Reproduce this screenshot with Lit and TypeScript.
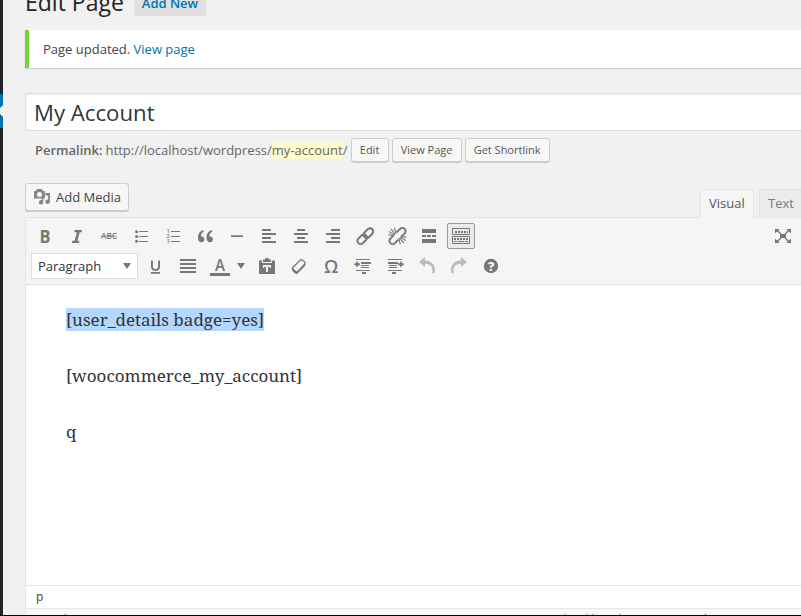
import { LitElement, html, css, svg, SVGTemplateResult } from "lit";
import { customElement, property } from "lit/decorators.js";
import { classMap } from "lit/directives/class-map.js";

const bars = (rows: number[][]) =>
  rows.map(([x, y, w, h]) => svg`<rect x=${x} y=${y} width=${w} height=${h} shape-rendering="crispEdges"/>`);

const ICONS: Record<string, SVGTemplateResult> = {
  bold: svg`<text x="4.6" y="16.6" font-size="17.5" font-weight="700" textLength="11" lengthAdjust="spacingAndGlyphs">B</text>`,
  italic: svg`<path d="M7.800 4h7v2.200h-2.100l-2.300 8.600h2l-.6 2.200h-7l.6-2.200h2.200l2.300-8.600H7.200z"/>`,
  strike: svg`<text x="2" y="13" font-size="8.400" font-weight="600" textLength="16" lengthAdjust="spacingAndGlyphs">ABC</text><path d="M2 9.800h16v.8H2z"/>`,
  bullets: svg`<circle cx="5.6" cy="5.7" r="1.5"/><circle cx="5.6" cy="10.5" r="1.5"/><circle cx="5.6" cy="15.3" r="1.5"/>${bars([[8, 5, 9, 1], [8, 10, 9, 1], [8, 15, 9, 1]])}`,
  numbers: svg`<g font-size="5.6" font-weight="600"><text x="3.6" y="7.2">1</text><text x="3.6" y="12.3">2</text><text x="3.6" y="17.400">3</text></g>${bars([[8, 5, 9, 1], [8, 10, 9, 1], [8, 15, 9, 1]])}`,
  quote: svg`<path d="M8.400 4.300C5 5 3 7.800 3 11.600 3 14.600 4.400 16.300 6.400 16.300c1.700 0 3-1.300 3-3 0-1.800-1.200-2.900-2.900-2.900h-.6c.1-2 .9-3.700 2.900-4.800z"/><path d="M16.900 4.300c-3.400.7-5.400 3.500-5.400 7.300 0 3 1.400 4.700 3.400 4.700 1.700 0 3-1.300 3-3 0-1.800-1.200-2.900-2.900-2.900h-.6c.1-2 .9-3.700 2.900-4.800z"/>`,
  rule: svg`<path d="M4 9.300h12v1.700H4z"/>`,
  left: svg`${bars([[3, 3, 9, 2], [3, 7, 14, 2], [3, 11, 9, 2], [3, 15, 14, 2]])}`,
  center: svg`${bars([[6, 3, 8, 2], [3, 7, 14, 2], [6, 11, 8, 2], [3, 15, 14, 2]])}`,
  right: svg`${bars([[8, 3, 9, 2], [3, 7, 14, 2], [8, 11, 9, 2], [3, 15, 14, 2]])}`,
  link: svg`<g fill="none" stroke="currentColor" stroke-width="2" transform="rotate(-45 10.500 10)"><rect x=".4" y="6.800" width="10.900" height="6.400" rx="3.200"/><rect x="9.200" y="6.800" width="10.900" height="6.400" rx="3.200"/></g>`,
  unlink: svg`<g fill="none" stroke="currentColor" stroke-width="2" transform="rotate(-45 10.500 10)"><path d="M8.500 6.800H3.600a3.200 3.200 0 0 0 0 6.400H8.500M12.500 6.800h4.900a3.200 3.200 0 0 1 0 6.400H12.500"/></g><path fill="none" stroke="currentColor" stroke-width="1.100" d="M9 8 7.500 1.800M8 8.200 4 2.800M7.400 9 1.800 5.400M7 9.800 1.500 8.600M11.800 12l1.500 6.200M12.800 11.800l4 5.400M13.400 11l5.600 3.600M13.800 10.200l5.500 1.200"/>`,
  more: svg`${bars([[3, 3, 14, 4], [3, 9, 4, 2], [8, 9, 4, 2], [13, 9, 4, 2], [3, 13, 14, 4]])}`,
  sink: svg`<path fill="none" stroke="currentColor" d="M1.500 2.500h17v6h-17zM1.500 10.500h17v7h-17z"/>${bars([[4, 5, 2, 2], [7, 5, 2, 2], [10, 5, 2, 2], [13, 5, 2, 2], [16, 5, 1, 2], [3, 12, 2, 2], [6, 12, 2, 2], [9, 12, 2, 2], [12, 12, 2, 2], [15, 12, 2, 2], [3, 15, 3, 1], [7, 15, 6, 1], [14, 15, 3, 1]])}`,
  under: svg`<path d="M5 4.600h1.900v5.600c0 2 .9 2.700 2.600 2.700s2.600-.7 2.600-2.700V4.600H14v5.800c0 3-1.600 4.400-4.500 4.400S5 13.400 5 10.400zM5 16h9v1.700H5z"/>`,
  justify: svg`${bars([[2, 3, 16, 2], [2, 7, 16, 2], [2, 11, 16, 2], [2, 15, 16, 2]])}`,
  color: svg`<text x="5" y="15" font-size="15.500" font-weight="600" textLength="10" lengthAdjust="spacingAndGlyphs">A</text>${bars([[0, 17, 20, 3]])}`,
  paste: svg`<path fill-rule="evenodd" d="M2 4.500h3V7h10V4.500h3V18H2zM6 9v3h1l.5-1.300H9V16h2v-5.300h1.500L13 12h1V9z"/><path d="M6 6V3.500h2C8 2.400 9 2 10 2s2 .4 2 1.500h2V6z"/>`,
  eraser: svg`<path fill="none" stroke="currentColor" stroke-width="1.300" stroke-linejoin="round" d="m3.300 12.200 7.800-8.100q.7-.6 1.500-.2l3 1.800q.7.500.3 1.500l-.5 2.400-7.700 7.300z"/><path d="m2.800 12 5 3.400 8.300-8.600.2 2.800-8.300 8.300q-.7.400-1.500-.2l-3.200-3q-.5-.6-.5-2.700z"/>`,
  omega: svg`<text x="3" y="16.700" font-size="18" font-weight="600" textLength="14.300" lengthAdjust="spacingAndGlyphs">Ω</text>`,
  outdent: svg`${bars([[3, 3, 14, 1], [8, 6, 10, 2], [8, 9, 8, 1], [8, 11, 8, 1], [3, 14, 14, 1], [9, 16, 4, 2]])}<path d="M1 8.300 4.800 5v2.300H7v2H4.800v2.300z"/>`,
  indent: svg`${bars([[3, 3, 14, 1], [3, 6, 10, 2], [4, 9, 8, 1], [4, 11, 8, 1], [3, 14, 14, 1], [7, 16, 4, 2]])}<path d="m19 8.300-3.800-3.300v2.300H13v2h2.200v2.300z"/>`,
  undo: svg`<path d="M8 1v3.500c6 .1 10 4 10 9.500 0 1.500-.3 2.500-.8 3.400l-2.200-.7c.3-.8.500-1.600.5-2.500 0-4-3-6.300-7.500-6.500V11L2 6z"/>`,
  redo: svg`<path d="M12 1v3.500C6 4.600 2 8.500 2 14c0 1.500.3 2.500.8 3.400l2.200-.7c-.3-.8-.5-1.600-.5-2.500 0-4 3-6.300 7.500-6.500V11l6-5z"/>`,
  help: svg`<circle cx="10" cy="10" r="7.200"/><text class="cut" x="6.900" y="14.500" font-size="12.500" font-weight="800">?</text>`,
  full: svg`${bars([[7, 8, 6, 4]])}<path d="M2 3h4.500L5.300 4.300l3.200 3.500-.8.700-3.500-3L2 7.300zM18 3h-4.500l1.200 1.300-3.200 3.500.8.700 3.500-3L18 7.300zM2 17h4.500l-1.200-1.300 3.200-3.500-.8-.7-3.500 3L2 12.700zM18 17h-4.500l1.200-1.300-3.200-3.500.8-.7 3.500 3L18 12.700z"/>`,
  media: svg`<path fill-rule="evenodd" d="M2 4h2l1-2h5l1 2h2v7.500H2zM7.500 5a2.500 2.500 0 1 0 0 5 2.500 2.500 0 0 0 0-5z"/><path d="M13.500 6H18v8.800a2.300 2.200 0 1 1-1.800-2.200V8.500h-2.700zM9.700 11.500h1.600v3.800a2.200 2.200 0 1 1-1.600-2.100z"/>`,
};

@customElement("wp-icon")
class WpIcon extends LitElement {
  @property() name = "";
  static styles = css`
    :host { display: block; width: 20px; height: 20px; flex: none; }
    svg { display: block; fill: currentColor; font-family: "Open Sans", "Noto Sans", sans-serif; }
    .cut { fill: #f5f5f5; }
  `;
  render() {
    return html`<svg width="20" height="20" viewBox="0 0 20 20">${ICONS[this.name]}</svg>`;
  }
}

const ROW_ONE = ["bold", "italic", "strike", "bullets", "numbers", "quote", "rule", "left", "center", "right", "link", "unlink", "more", "sink"];
const ROW_TWO = ["paste", "eraser", "omega", "outdent", "indent", "undo", "redo", "help"];

@customElement("app-root")
class AppRoot extends LitElement {
  static styles = css`
    * { box-sizing: border-box; }
    :host { box-sizing: border-box; display: flex; width: 801px; height: 616px; overflow: hidden; background: #f1f1f1; border-bottom: 1px solid #050608;
      font: 13px/18px "Open Sans", "Noto Sans", sans-serif; color: #444; white-space: nowrap; }
    .menu { flex: none; width: 3px; background: #20252b; padding-top: 94px; }
    .current { display: block; height: 34px; width: 3px; }
    .main { flex: none; width: 776px; margin-left: 22px; display: flex; flex-direction: column; }
    .head { display: flex; height: 30px; flex: none; }
    h1 { margin: -12px 0 0; font-size: 23px; line-height: 29px; font-weight: 400; color: #222; width: 109px; }
    .new { height: 26px; margin-top: -10px; width: 72px; text-align: center; background: #e0e0e0; border-radius: 2px; color: #0073aa; font-weight: 600; line-height: 27px; }
    .notice { flex: none; height: 38px; border-left: 4px solid #7ad03a; background: #fff; box-shadow: 0 1px 1px rgba(0,0,0,.12); padding: 10px 14px; }
    .notice a { color: #0073aa; }
    .title { flex: none; margin-top: 25px; height: 38px; border: 1px solid #ddd; border-right: 0; background: #fff; box-shadow: inset 0 1px 2px rgba(0,0,0,.07); padding: 0 8px; font-size: 22.2px; line-height: 37px; color: #32373c; }
    .perma { flex: none; display: flex; align-items: center; height: 24px; margin-top: 7px; padding-left: 10px; color: #666; }
    .perma b { font-weight: 600; margin-right: 3px; }
    .url { width: 242px; }
    mark { background: #fffbcc; color: inherit; }
    .btn { border: 1px solid #ccc; border-radius: 3px; background: #f7f7f7; box-shadow: 0 1px 0 #ccc; color: #555; text-align: center; }
    .small { height: 24px; line-height: 22px; font-size: 11px; margin-left: 3px; }
    .edit { width: 38px; } .view { width: 70px; } .short { width: 85px; }
    .tools { flex: none; display: flex; height: 55px; align-items: flex-end; justify-content: space-between; }
    .add { display: flex; align-items: center; width: 104px; height: 28px; padding-left: 6px; margin-bottom: 6px; color: #444; gap: 4px; }
    .add wp-icon { color: #82878c; }
    .tabs { display: flex; gap: 5px; margin-right: -8px; }
    .tab { height: 28px; border: 1px solid #e5e5e5; border-bottom: 0; line-height: 27px; padding: 0 8px; color: #777; background: #ebebeb; width: 50px; }
    .on { background: #f5f5f5; color: #555; width: 54px; height: 29px; margin-bottom: -1px; position: relative; }
    .editor { flex: none; border: 1px solid #e5e5e5; border-right: 0; border-bottom: 0; height: 398px; display: flex; flex-direction: column; background: #fff; }
    .bar { flex: none; height: 67px; background: #f5f5f5; border-bottom: 1px solid #ddd; padding: 3px 0 0 5px; color: #777; }
    .row { display: flex; height: 30px; align-items: center; }
    .key { width: 28px; height: 26px; margin-right: 4px; display: grid; place-items: center; flex: none; }
    .pressed { border: 1px solid #999; background: #ebebeb; border-radius: 2px; }
    .dim { color: #bbb; }
    .grow { margin-left: auto; }
    .select { width: 107px; height: 26px; border: 1px solid #ddd; background: #fff; color: #333; display: flex; align-items: center; justify-content: space-between; padding: 0 6px; margin-right: 4px; }
    .caret { border: 4px solid transparent; border-top: 6px solid #777; border-bottom: 0; }
    .split { display: flex; align-items: center; width: 43px; margin-right: 4px; gap: 7px; padding-left: 4px; }
    .body { flex: 1; padding: 21px 40px; font-family: "Noto Serif", "Droid Serif", "DejaVu Serif", serif; font-size: 17px; line-height: 28px; color: #333; }
    .body p { margin: 0 0 28px; height: 28px; }
    .sel { background: #b3d7ff; display: inline-block; height: 23px; line-height: 23px; }
    .path { flex: none; height: 23px; border-top: 1px solid #e5e5e5; padding-left: 10px; line-height: 22px; font-size: 12px; color: #444; }
    .foot { flex: none; height: 7px; overflow: hidden; background: #f7f7f7; border-top: 1px solid #e5e5e5; display: flex; justify-content: space-between; padding: 2px 78px 0 10px; font-size: 12px; color: #666; }
  `;
  private key(name: string, pressed = false) {
    return html`<span class=${classMap({ key: true, pressed, dim: name === "undo" || name === "redo" })}><wp-icon .name=${name}></wp-icon></span>`;
  }
  render() {
    return html`
      <div class="menu"><svg class="current" viewBox="0 0 3 34"><path fill="#0073aa" d="M0 0h3v11L0 14zM0 20l3 3v11H0z"/><path fill="#f1f1f1" d="M3 11v12l-3-3v-6z"/></svg></div>
      <div class="main">
        <div class="head"><h1>Edit Page</h1><a class="new">Add New</a></div>
        <div class="notice">Page updated. <a>View page</a></div>
        <div class="title">My Account</div>
        <div class="perma"><b>Permalink:</b><span class="url">http://localhost/wordpress/<mark>my-account</mark>/</span>
          <span class="btn small edit">Edit</span><span class="btn small view">View Page</span><span class="btn small short">Get Shortlink</span></div>
        <div class="tools">
          <span class="btn add"><wp-icon .name=${"media"}></wp-icon>Add Media</span>
          <div class="tabs"><span class="tab on">Visual</span><span class="tab">Text</span></div>
        </div>
        <div class="editor">
          <div class="bar">
            <div class="row">${ROW_ONE.map((n) => this.key(n, n === "sink"))}<span class="grow">${this.key("full")}</span></div>
            <div class="row"><span class="select">Paragraph<i class="caret"></i></span>${this.key("under")}${this.key("justify")}
              <span class="split"><wp-icon .name=${"color"}></wp-icon><i class="caret"></i></span>
              ${ROW_TWO.map((n) => this.key(n))}</div>
          </div>
          <div class="body"><p><span class="sel">[user_details badge=yes]</span></p><p>[woocommerce_my_account]</p><p>q</p></div>
          <div class="path">p</div>
          <div class="foot"><span>Word count: 3</span><span>Last edited by admin on November</span></div>
        </div>
      </div>`;
  }
}
